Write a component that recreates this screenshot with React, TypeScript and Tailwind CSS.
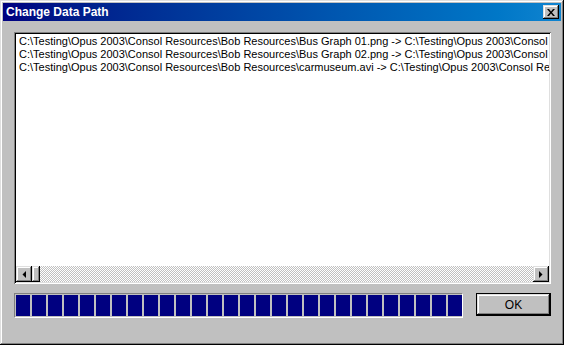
const raised =
  "shadow-[inset_-1px_-1px_0_#000,inset_1px_1px_0_#dfdfdf,inset_-2px_-2px_0_#808080,inset_2px_2px_0_#fff]";

const lines = [
  "C:\\Testing\\Opus 2003\\Consol Resources\\Bob Resources\\Bus Graph 01.png -> C:\\Testing\\Opus 2003\\Consol Resources\\Bob Resources\\Bus Graph 01.png",
  "C:\\Testing\\Opus 2003\\Consol Resources\\Bob Resources\\Bus Graph 02.png -> C:\\Testing\\Opus 2003\\Consol Resources\\Bob Resources\\Bus Graph 02.png",
  "C:\\Testing\\Opus 2003\\Consol Resources\\Bob Resources\\carmuseum.avi -> C:\\Testing\\Opus 2003\\Consol Resources\\Bob Resources\\carmuseum.avi",
];

function Arrow({ dir }: { dir: "left" | "right" }) {
  return (
    <div className={`grid h-4 w-4 shrink-0 place-items-center bg-[#c0c0c0] ${raised}`}>
      <svg width="4" height="7" viewBox="0 0 4 7">
        {dir === "left" ? <path d="M4 0v7L0.5 3.5z" fill="#000" /> : <path d="M0 0v7l3.5-3.5z" fill="#000" />}
      </svg>
    </div>
  );
}

export default function App() {
  return (
    <div className="flex h-[345px] w-[564px] flex-col bg-[#c0c0c0] p-[3px] font-['Liberation_Sans',Arial,sans-serif] shadow-[inset_-1px_-1px_0_#000,inset_1px_1px_0_#dfdfdf,inset_-2px_-2px_0_#808080,inset_2px_2px_0_#fff]">
      <div className="flex h-[18px] items-center justify-between bg-gradient-to-r from-[#000080] to-[#1084d0] pl-[3px] pr-[2px]">
        <span className="text-[12px] font-bold leading-none text-white">Change Data Path</span>
        <div className={`grid h-[14px] w-4 place-items-center bg-[#c0c0c0] ${raised}`}>
          <svg width="8" height="7" viewBox="0 0 8 7">
            <path d="M0 0h2l2 2.5L6 0h2L5 3.5 8 7H6L4 4.5 2 7H0l3-3.5z" fill="#000" />
          </svg>
        </div>
      </div>

      <div className="ml-[11px] mt-[11px] flex h-[252px] w-[537px] flex-col bg-white p-[2px] shadow-[inset_1px_1px_0_#808080,inset_-1px_-1px_0_#fff,inset_2px_2px_0_#000,inset_-2px_-2px_0_#dfdfdf]">
        <div className="flex-1 overflow-hidden pl-[3px] pt-[1px] text-[11px] leading-[13px] text-black">
          {lines.map((l) => (
            <div key={l} className="whitespace-nowrap">
              {l}
            </div>
          ))}
        </div>
        <div className="flex h-4">
          <Arrow dir="left" />
          <div className={`h-4 w-2 shrink-0 bg-[#c0c0c0] ${raised}`} />
          <div className="flex-1 bg-[conic-gradient(#c0c0c0_90deg,#fff_90deg_180deg,#c0c0c0_180deg_270deg,#fff_270deg)] bg-[length:2px_2px]" />
          <Arrow dir="right" />
        </div>
      </div>

      <div className="ml-[11px] mt-[9px] flex items-start">
        <div className="flex h-[25px] w-[449px] gap-[2px] overflow-hidden border border-b-white border-l-[#808080] border-r-white border-t-[#808080] p-px">
          {Array.from({ length: 29 }).map((_, i) => (
            <div key={i} className="h-full w-[14px] shrink-0 bg-[#000080]" />
          ))}
        </div>
        <button className="ml-[13px] h-[23px] w-[75px] border border-black bg-[#c0c0c0] text-[12px] text-black">
          <div className={`grid h-full w-full place-items-center ${raised}`}>OK</div>
        </button>
      </div>
    </div>
  );
}
